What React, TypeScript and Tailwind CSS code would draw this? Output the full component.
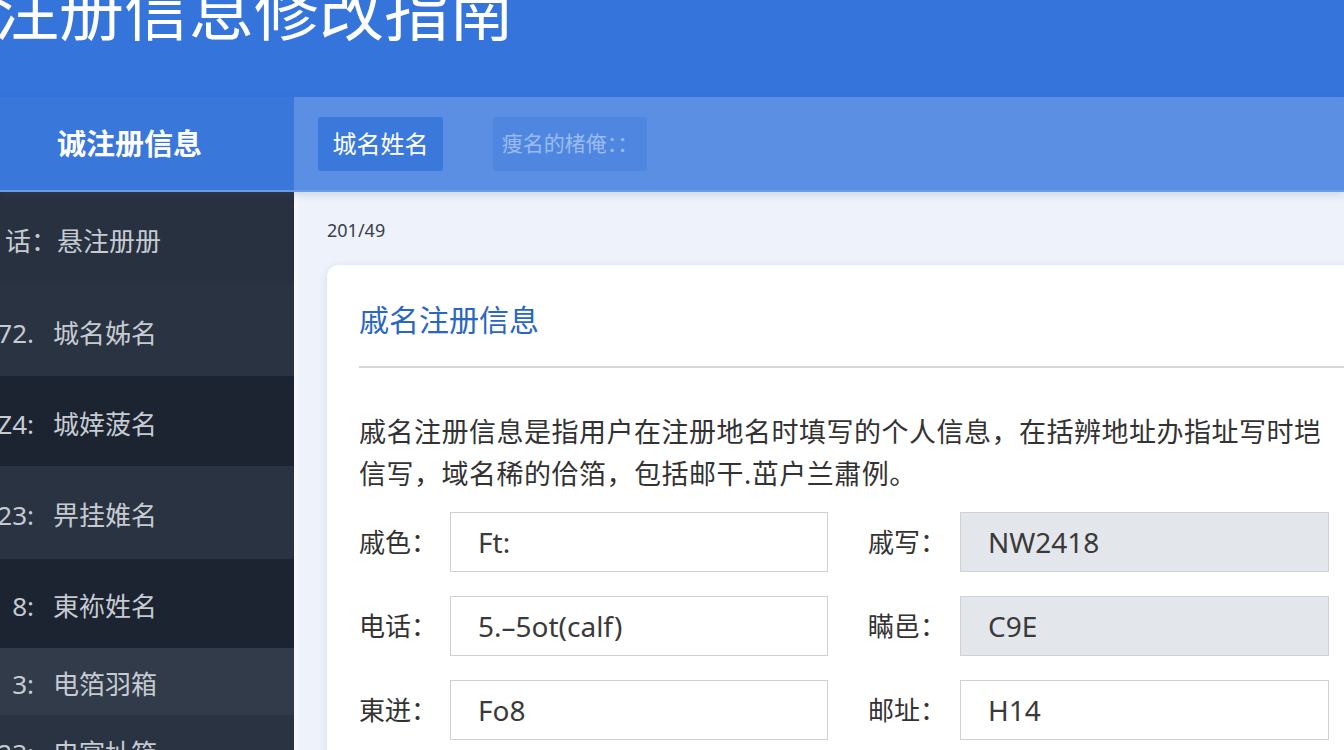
import React from 'react'

const font = { fontFamily: '"Noto Sans", "Noto Sans CJK SC", sans-serif' }

type NavItem = { pre: string; name: string; h: string; bg: string }

const navItems: NavItem[] = [
  { pre: '话：', name: '悬注册册', h: 'h-[92px]', bg: 'bg-[#283140]' },
  { pre: '72.', name: '城名姊名', h: 'h-[92px]', bg: 'bg-[#2a3341]' },
  { pre: 'Z4:', name: '城婞菠名', h: 'h-[90px]', bg: 'bg-[#1c2431]' },
  { pre: '23:', name: '畀挂婎名', h: 'h-[93px]', bg: 'bg-[#2a3342]' },
  { pre: '8:', name: '東袮姓名', h: 'h-[89px]', bg: 'bg-[#1c2431]' },
  { pre: '3:', name: '电箔羽箱', h: 'h-[67px]', bg: 'bg-[#323b4a]' },
  { pre: '23:', name: '电宴址箱', h: 'h-[70px]', bg: 'bg-[#2a3342]' },
]

type Field = { label: string; value: string; gray?: boolean }

const rows: [Field, Field][] = [
  [
    { label: '戚色：', value: 'Ft:' },
    { label: '戚写：', value: 'NW2418', gray: true },
  ],
  [
    { label: '电话：', value: '5.–5ot(calf)' },
    { label: '瞞邑：', value: 'C9E', gray: true },
  ],
  [
    { label: '東迸：', value: 'Fo8' },
    { label: '邮址：', value: 'H14' },
  ],
]

const FieldBox = ({ f, labelW, inputW }: { f: Field; labelW: string; inputW: string }) => (
  <div className="flex items-center">
    <span className={`${labelW} text-[26px] text-[#333] leading-none`}>{f.label}</span>
    <div
      className={`${inputW} h-[60px] flex items-center pl-[27px] border-[1.5px] border-[#cdd1d6] text-[28px] text-[#3a3a3a] ${
        f.gray ? 'bg-[#e3e6ea]' : 'bg-white'
      }`}
    >
      {f.value}
    </div>
  </div>
)

export default function App() {
  return (
    <div className="w-[1344px] h-[750px] overflow-hidden bg-[#edf2fb]" style={font}>
      {/* header */}
      <div className="h-[97px] bg-[#3574da] overflow-hidden">
        <h1 className="text-[65px] leading-none text-white font-normal -mt-[22px] -ml-[6px] whitespace-nowrap">
          注册信息修改指南
        </h1>
      </div>

      {/* tab bar */}
      <div className="flex h-[95px] relative z-10 shadow-[0_3px_8px_rgba(60,90,140,0.18)]">
        <div className="w-[294px] bg-[#3a77db] flex items-center pl-[57px] border-b-2 border-[#6a9be6]">
          <span className="text-[29px] font-semibold text-white">诚注册信息</span>
        </div>
        <div className="flex-1 bg-[#5a8fe4] flex items-center pl-[24px] gap-[50px] border-b-2 border-[#6a9be6]">
          <div className="w-[125px] h-[54px] rounded-[3px] bg-[#3a78dc] flex items-center justify-center text-[24px] text-white">
            城名姓名
          </div>
          <div className="w-[154px] h-[54px] rounded-[3px] bg-[#4f87e0] flex items-center justify-center text-[21px] text-[#9bbbf0]">
            痩名的楮俺：：
          </div>
        </div>
      </div>

      {/* body */}
      <div className="flex h-[558px] overflow-hidden">
        <div className="w-[294px] shrink-0 flex flex-col border-r-[5px] border-[#f4f7fc] box-content">
          {navItems.map((n, i) => (
            <div
              key={i}
              className={`${n.h} ${n.bg} shrink-0 flex items-center pt-[6px] text-[26px] text-[#c6cbd2] whitespace-nowrap`}
            >
              {i === 0 ? (
                <>
                  <span className="w-[57px] text-right shrink-0">{n.pre}</span>
                  <span>{n.name}</span>
                </>
              ) : (
                <>
                  <span className="w-[34px] shrink-0 flex justify-end">
                    <span className="shrink-0">{n.pre}</span>
                  </span>
                  <span className="ml-[19px]">{n.name}</span>
                </>
              )}
            </div>
          ))}
        </div>

        <div className="flex-1 pl-[28px] pt-[25px] overflow-hidden">
          <div className="text-[18px] leading-[26px] text-[#3b4049]">201/49</div>
          <div className="mt-[22px] w-[1070px] bg-white rounded-xl shadow-[0_2px_10px_rgba(60,90,140,0.12)] pl-[32px] pt-[35px] pb-[40px]">
            <div className="text-[30px] leading-[40px] text-[#2a66c4]">戚名注册信息</div>
            <div className="mt-[26px] h-[2px] bg-[#d6d8db]" />
            <div className="mt-[43px] text-[27px] tracking-[0.5px] leading-[42px] text-[#333] whitespace-nowrap">
              <div>戚名注册信息是指用户在注册地名时填写的个人信息，在括辨地址办指址写时垲</div>
              <div>信写，域名稀的佮箔，包括邮干.茁户兰肅例。</div>
            </div>
            <div className="mt-[17px] flex flex-col gap-[24px]">
              {rows.map((r, i) => (
                <div key={i} className="flex gap-[40px]">
                  <FieldBox f={r[0]} labelW="w-[91px]" inputW="w-[378px]" />
                  <FieldBox f={r[1]} labelW="w-[92px]" inputW="w-[369px]" />
                </div>
              ))}
            </div>
          </div>
        </div>
      </div>
    </div>
  )
}
